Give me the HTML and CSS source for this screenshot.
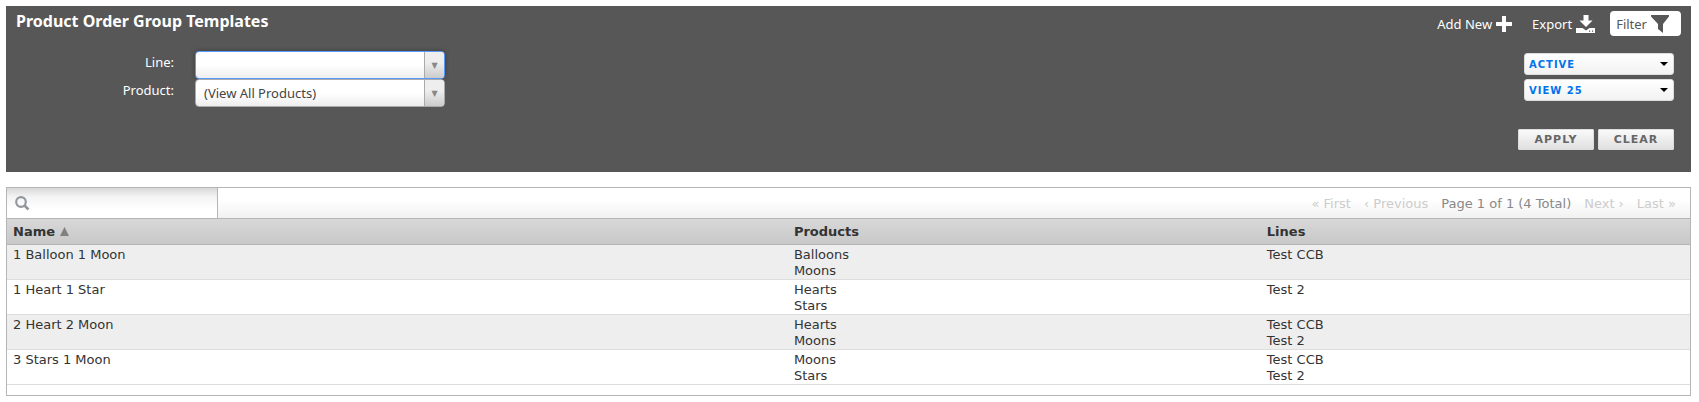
FILE: index.html
```html
<!DOCTYPE html>
<html lang="en">
<head>
    <meta charset="utf-8">
    <title>Product Order Group Templates</title>
    <link rel="stylesheet" href="styles.css">
</head>
<body>
    <form class="panel">
        <div class="panel-top">
            <h1>Product Order Group Templates</h1>
            <div class="actions">
                <button type="button" class="action">Add New
                    <svg width="16" height="16" viewBox="0 0 16 16"><path d="M6 0h4v6h6v4h-6v6H6v-6H0V6h6z" fill="#fff"/></svg>
                </button>
                <button type="button" class="action">Export
                    <svg width="19" height="18" viewBox="0 0 19 18"><path d="M7.500 0h5v5.500h4L10 12 3.500 5.500h4z" fill="#fff"/><path d="M0 13h6.500l3.500 2.500 3.500-2.500H19v5H0z" fill="#fff"/><path d="M13 15.500h1.200v1.200H13zM16 15.500h1.200v1.200H16z" fill="#575757"/></svg>
                </button>
                <button type="button" class="action active">Filter
                    <svg width="18" height="18" viewBox="0 0 18 18"><path d="M0 0h18v1.500l-6 7.500v9l-5-4V9L0 1.500z" fill="#575757"/></svg>
                </button>
            </div>
        </div>
        <div class="panel-body">
            <div class="fields">
                <div class="field">
                    <label for="line">Line:</label>
                    <span class="combo focused">
                        <select id="line"><option></option></select>
                    </span>
                </div>
                <div class="field">
                    <label for="product">Product:</label>
                    <span class="combo">
                        <select id="product"><option>(View All Products)</option></select>
                    </span>
                </div>
            </div>
            <div class="options">
                <span class="pick"><select aria-label="Status"><option>ACTIVE</option></select></span>
                <span class="pick"><select aria-label="Page size"><option>VIEW 25</option></select></span>
                <div class="buttons">
                    <button type="submit">APPLY</button>
                    <button type="reset">CLEAR</button>
                </div>
            </div>
        </div>
    </form>

    <div class="grid">
        <div class="toolbar">
            <label class="search">
                <svg width="15" height="15" viewBox="0 0 15 15"><circle cx="6" cy="6" r="4.800" fill="none" stroke="#93979c" stroke-width="2.200"/><path d="M9.500 9.500l4 4" stroke="#93979c" stroke-width="2.600"/></svg>
                <input type="text" aria-label="Search">
            </label>
            <div class="pager">
                <a href="#">« First</a>
                <a href="#">‹ Previous</a>
                <span>Page 1 of 1 (4 Total)</span>
                <a href="#">Next ›</a>
                <a href="#">Last »</a>
            </div>
        </div>
        <table>
            <thead>
                <tr>
                    <th class="col-name">Name <svg width="9" height="9" viewBox="0 0 9 9"><path d="M4.500 0L9 9H0z" fill="#808080"/></svg></th>
                    <th class="col-products">Products</th>
                    <th>Lines</th>
                </tr>
            </thead>
            <tbody>
                <tr><td>1 Balloon 1 Moon</td><td>Balloons<br>Moons</td><td>Test CCB</td></tr>
                <tr><td>1 Heart 1 Star</td><td>Hearts<br>Stars</td><td>Test 2</td></tr>
                <tr><td>2 Heart 2 Moon</td><td>Hearts<br>Moons</td><td>Test CCB<br>Test 2</td></tr>
                <tr><td>3 Stars 1 Moon</td><td>Moons<br>Stars</td><td>Test CCB<br>Test 2</td></tr>
            </tbody>
        </table>
    </div>
</body>
</html>
```
FILE: styles.css
```css
* {
    box-sizing: border-box;
}
body {
    margin: 6px 8px 6px 6px;
    font-family: Verdana, "DejaVu Sans", sans-serif;
    font-size: 13px;
    line-height: 16px;
    color: #333;
}
svg {
    display: block;
}
button, select, input {
    margin: 0;
    font-family: inherit;
}

/* filter panel */
.panel {
    background: #575757;
    color: #fff;
    padding: 5px 10px 22px;
}
.panel-top {
    display: flex;
    justify-content: space-between;
}
h1 {
    margin: 0;
    font-family: "Noto Sans", sans-serif;
    font-size: 16px;
    line-height: 20px;
}
.actions {
    display: flex;
    gap: 10px;
}
.action {
    display: flex;
    align-items: center;
    gap: 4px;
    height: 25px;
    padding: 0 5px;
    border: 0;
    border-radius: 4px;
    background: none;
    color: #fff;
    font: 13px "Noto Sans", sans-serif;
}
.action.active {
    background: #fff;
    color: #575757;
    padding: 0 12px 0 6px;
}
.panel-body {
    display: flex;
    justify-content: space-between;
    padding: 15px 7px 0 0;
}
.field {
    display: flex;
    height: 28px;
    font-family: "Noto Sans", sans-serif;
}
.field label {
    width: 158px;
    margin-right: 21px;
    line-height: 22px;
    text-align: right;
}
.combo, .pick {
    position: relative;
    display: block;
}
.combo select {
    appearance: none;
    width: 250px;
    height: 28px;
    padding: 0 30px 0 8px;
    border: 1px solid #aaa;
    border-radius: 4px;
    background: linear-gradient(#fff 50%, #eee);
    color: #444;
    font-size: 13px;
}
.combo::after {
    content: "▼";
    position: absolute;
    top: 1px;
    right: 1px;
    width: 19px;
    height: 26px;
    border-left: 1px solid #aaa;
    border-radius: 0 3px 3px 0;
    background: linear-gradient(#eee 40%, #ccc);
    color: #888;
    font: 8px/28px "DejaVu Sans", sans-serif;
    text-align: center;
    pointer-events: none;
}
.combo.focused select {
    border-color: #5897fb;
    box-shadow: 0 0 5px rgba(0, 0, 0, 0.3);
}
.options {
    display: flex;
    flex-direction: column;
    align-items: flex-end;
    gap: 4px;
    padding-top: 2px;
}
.pick select {
    appearance: none;
    display: block;
    width: 150px;
    height: 22px;
    padding: 0 4px;
    border: 1px solid #ddd;
    border-radius: 3px;
    background: linear-gradient(#fff, #f2f2f2);
    color: #0073ea;
    font-size: 10px;
    font-weight: bold;
    letter-spacing: 1px;
}
.pick::after {
    content: "";
    position: absolute;
    top: 9px;
    right: 6px;
    border: 4px solid transparent;
    border-top-color: #000;
    border-bottom: 0;
    pointer-events: none;
}
.buttons {
    display: flex;
    gap: 4px;
    padding-top: 24px;
}
.buttons button {
    width: 76px;
    height: 21px;
    padding: 0;
    border: 1px solid #ddd;
    border-radius: 1px;
    background: linear-gradient(#fafafa, #e0e0e0);
    color: #666;
    font-size: 11px;
    font-weight: bold;
    letter-spacing: 1px;
}

/* results grid */
.grid {
    margin-top: 15px;
    padding-bottom: 10px;
    border: 1px solid #b5b5b5;
}
.toolbar {
    display: flex;
    justify-content: space-between;
    height: 31px;
    border-bottom: 1px solid #b5b5b5;
    background: linear-gradient(#fff 40%, #f1f1f1);
}
.search {
    display: flex;
    align-items: center;
    gap: 6px;
    width: 211px;
    padding-left: 8px;
    border-right: 1px solid #b5b5b5;
    background: linear-gradient(#d8d8d8, #f4f4f4 30%, #fff 70%);
}
.search input {
    flex: 1;
    min-width: 0;
    border: 0;
    outline: 0;
    background: none;
}
.pager {
    display: flex;
    gap: 13px;
    padding-right: 14px;
    line-height: 31px;
    color: #888;
}
.pager a {
    color: #ccc;
    text-decoration: none;
}
table {
    width: 100%;
    border-collapse: separate;
    border-spacing: 0;
    table-layout: fixed;
}
th {
    height: 26px;
    padding: 0 6px;
    border-bottom: 1px solid #b5b5b5;
    background: linear-gradient(#d8d8d8, #c8c8c8);
    text-align: left;
}
th svg {
    display: inline-block;
}
.col-name {
    width: 46.4%;
}
.col-products {
    width: 28.1%;
}
td {
    padding: 2px 6px 0;
    border-bottom: 1px solid #ddd;
    vertical-align: top;
}
tbody tr:nth-child(odd) {
    background: #eee;
}
```
